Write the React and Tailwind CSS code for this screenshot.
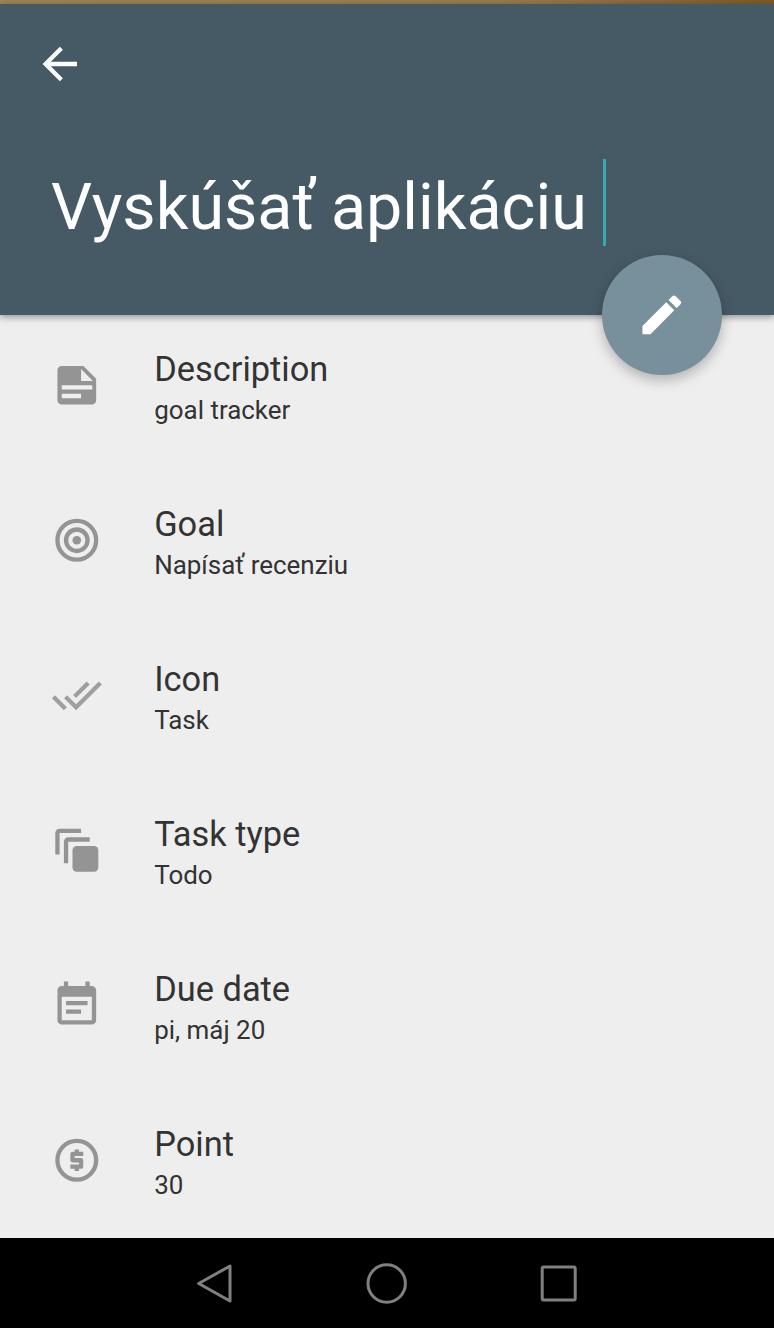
const icons = {
  description: (
    <path
      fillRule="evenodd"
      d="M5 3h10.1L21 9v10a2 2 0 0 1-2 2H5a2 2 0 0 1-2-2V5a2 2 0 0 1 2-2zm9 1.5V10h5.5zM5 12v2h14.2v-2zm0 4v2h9v-2z"
    />
  ),
  goal: (
    <>
      <circle cx="12" cy="12" r="9" fill="none" stroke="currentColor" strokeWidth="2" />
      <circle cx="12" cy="12" r="5" fill="none" stroke="currentColor" strokeWidth="2" />
      <circle cx="12" cy="12" r="2" />
    </>
  ),
  task: (
    <path
      opacity="0.88"
      d="M18 7l-1.41-1.41-6.34 6.34 1.41 1.41L18 7zm4.24-1.41L11.66 16.17 7.48 12l-1.41 1.41L11.66 19l12-12-1.42-1.41zM.41 13.41L6 19l1.41-1.41L1.83 12 .41 13.41z"
    />
  ),
  type: (
    <>
      <path d="M2 14V4a2 2 0 0 1 2-2h10v2H4v10z" />
      <path d="M6 18V8a2 2 0 0 1 2-2h10v2H8v10z" />
      <rect x="10" y="10" width="12" height="12" rx="2" />
    </>
  ),
  date: (
    <path
      fillRule="evenodd"
      d="M6 1h2v2h8V1h2v2h1a2 2 0 0 1 2 2v14a2 2 0 0 1-2 2H5a2 2 0 0 1-2-2V5a2 2 0 0 1 2-2h1zM5 8v11h14V8zm2 2h10v2H7zm0 4h7v2H7z"
    />
  ),
  point: (
    <>
      <circle cx="12" cy="12" r="9" fill="none" stroke="currentColor" strokeWidth="2" />
      <path d="M11 17h2v-1h1c.55 0 1-.45 1-1v-3c0-.55-.45-1-1-1h-3v-1h4V8h-2V7h-2v1h-1c-.55 0-1 .45-1 1v3c0 .55.45 1 1 1h3v1H9v2h2v1z" />
    </>
  ),
};

const rows = [
  { icon: "description", title: "Description", value: "goal tracker" },
  { icon: "goal", title: "Goal", value: "Napísať recenziu" },
  { icon: "task", title: "Icon", value: "Task" },
  { icon: "type", title: "Task type", value: "Todo" },
  { icon: "date", title: "Due date", value: "pi, máj 20" },
  { icon: "point", title: "Point", value: "30" },
];

const Icon = ({ children, className = "", viewBox = "0 0 24 24" }) => (
  <svg viewBox={viewBox} fill="currentColor" className={`w-[51.6px] h-[51.6px] shrink-0 ${className}`}>
    {children}
  </svg>
);

const Header = () => {
  return (
    <header className="relative z-10 h-[311px] shrink-0 bg-[#465a65] text-white shadow-[0_2px_7px_rgba(0,0,0,0.4)]">
      <button className="block pl-[34px] pt-[34px]" aria-label="Back">
        <Icon viewBox="0 -0.1 24 24">
          <path d="M20 11H7.83l5.59-5.59L12 4l-8 8 8 8 1.41-1.41L7.83 13H20v-2z" />
        </Icon>
      </button>
      <div className="flex items-center pl-[51px] mt-[69.5px] h-[87px]">
        <h1 className="pt-[9px] text-[64.6px] leading-[87px] whitespace-pre">Vyskúšať aplikáciu </h1>
        <span className="w-[3px] h-[87px] bg-[#3ca5ae]" />
      </div>
      <button
        className="absolute right-[52px] -bottom-[60px] w-[120px] h-[120px] rounded-full bg-[#78909c] flex items-center justify-center shadow-[0_5px_13px_rgba(0,0,0,0.26)]"
        aria-label="Edit"
      >
        <Icon>
          <path d="M3 17.25V21h3.75L17.81 9.94l-3.75-3.75L3 17.25zM20.71 7.04c.39-.39.39-1.02 0-1.41l-2.34-2.34c-.39-.39-1.02-.39-1.41 0l-1.83 1.83 3.75 3.75 1.83-1.83z" />
        </Icon>
      </button>
    </header>
  );
};

const Row = ({ icon, title, value }) => {
  return (
    <li className="flex h-[155px] pl-[51px]">
      <Icon viewBox="0 -0.2 24 24" className="mt-[44px] text-[#949494]">
        {icons[icon]}
      </Icon>
      <div className="pt-[33px] pl-[51.6px]">
        <div className="text-[34.4px] leading-[42px]">{title}</div>
        <div className="text-[25.95px] leading-[40px]">{value}</div>
      </div>
    </li>
  );
};

const NavBar = () => {
  return (
    <nav className="h-[90.5px] shrink-0 bg-black flex justify-center gap-32 pt-[23.5px] text-[#808080]">
      <svg viewBox="0 -0.5 44 44" className="w-11 h-11" fill="none" stroke="currentColor" strokeWidth="3" strokeLinejoin="round">
        <path d="M5.7 22L37 4.5v35z" />
      </svg>
      <svg viewBox="0 -0.5 44 44" className="w-11 h-11" fill="none" stroke="currentColor" strokeWidth="3">
        <circle cx="21.7" cy="22" r="18.7" />
      </svg>
      <svg viewBox="0 -0.5 44 44" className="w-11 h-11" fill="none" stroke="currentColor" strokeWidth="3">
        <rect x="5.2" y="5.5" width="33" height="33" rx="1.5" />
      </svg>
    </nav>
  );
};

const App = () => {
  return (
    <div className="w-[774px] h-[1328px] flex flex-col overflow-hidden bg-[#eeeeee] text-[#333333] font-['Roboto',sans-serif]">
      <div className="h-1 shrink-0 bg-linear-to-r from-[#a08457] via-[#9a7b50] via-65% to-[#805a27]" />
      <Header />
      <ul className="flex-1 min-h-0 overflow-hidden">
        {rows.map((row) => (
          <Row key={row.icon} {...row} />
        ))}
      </ul>
      <NavBar />
    </div>
  );
};

export default App;
